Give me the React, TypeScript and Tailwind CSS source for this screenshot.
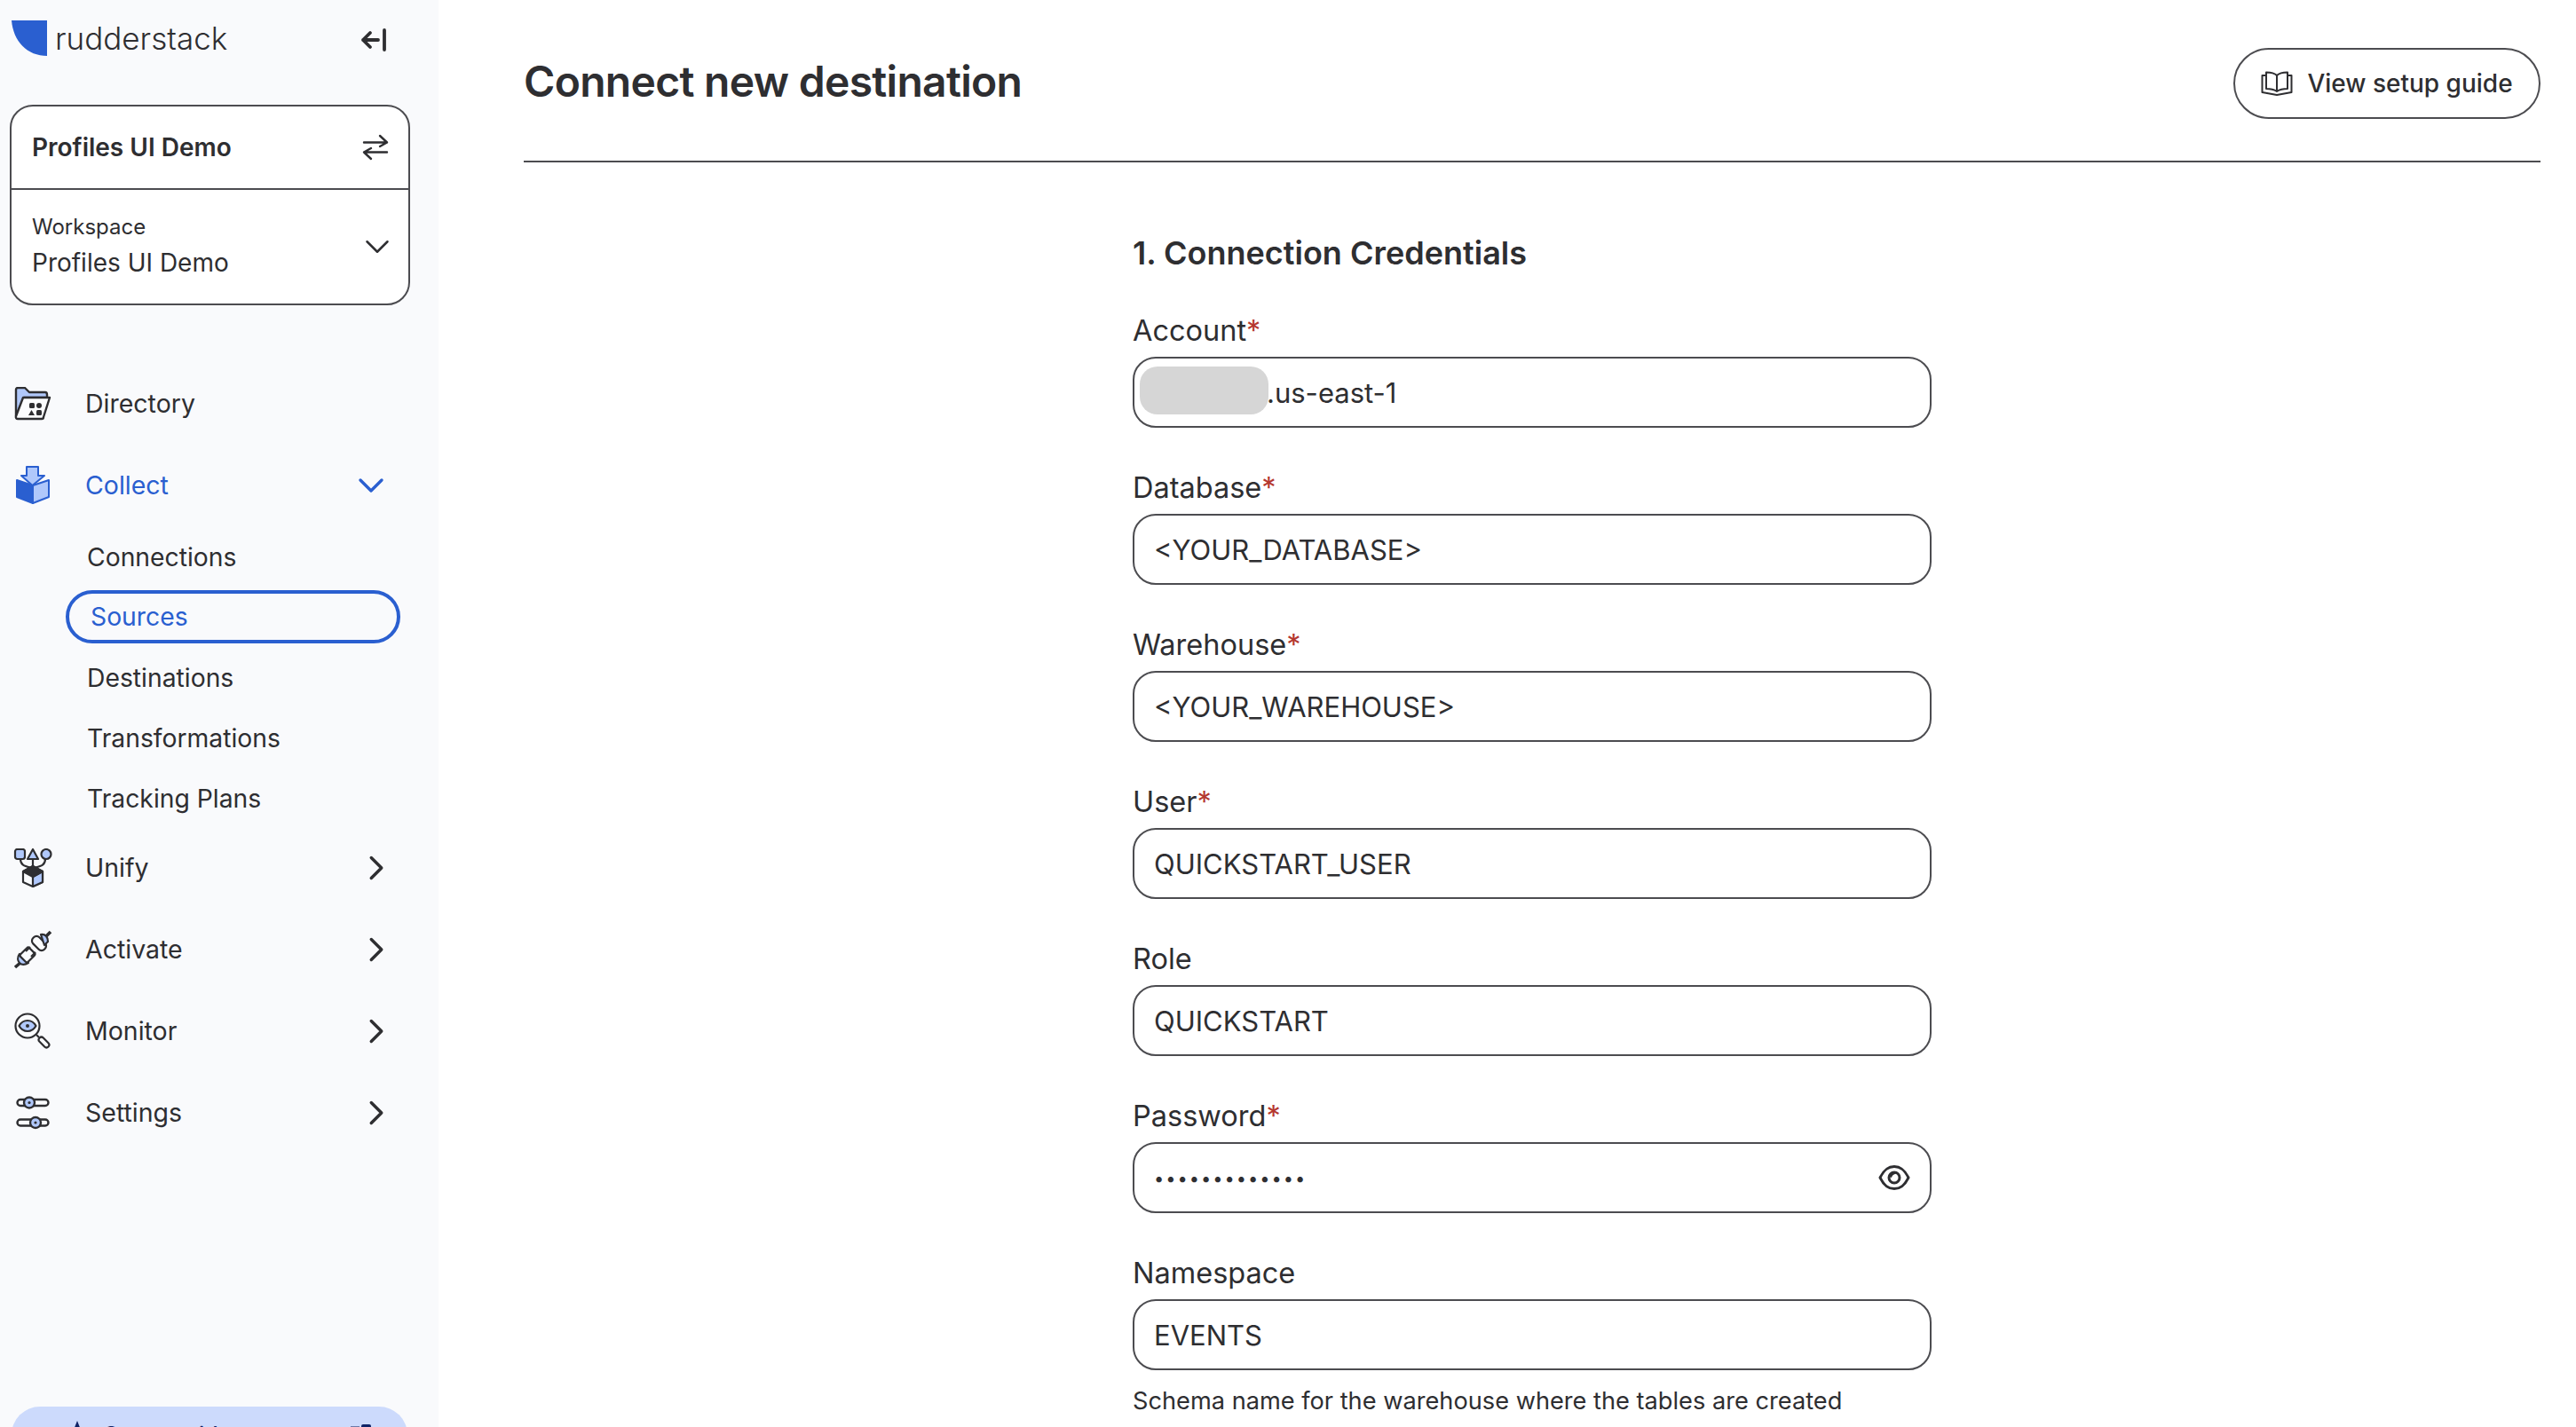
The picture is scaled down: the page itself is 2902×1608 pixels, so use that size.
import { ChevronDown, ChevronRight } from "lucide-react";

const blue = "#2a5fd0";
const light = "#b0c8fb";
const ink = "#2e2e31";

function Logo() {
  return (
    <svg width="40" height="40" viewBox="0 0 40 40" className="shrink-0">
      <path d="M0 0H40V40C18 40 2 24 0 0Z" fill={blue} />
    </svg>
  );
}

function CollapseIcon() {
  return (
    <svg width="30" height="26" viewBox="0 0 30 26" fill="none" stroke={ink} strokeWidth="3.8" strokeLinecap="round" strokeLinejoin="round">
      <path d="M11 5L3 13L11 21M3 13H20" />
      <path d="M27 2V24" />
    </svg>
  );
}

function SwapIcon() {
  return (
    <svg width="30" height="30" viewBox="0 0 30 30" fill="none" stroke={ink} strokeWidth="2.4" strokeLinecap="round" strokeLinejoin="round">
      <path d="M2 9.5H28M20 2L28 9.5L20 14" />
      <path d="M28 20.5H2M10 28L2 20.5L10 16" />
    </svg>
  );
}

function DirectoryIcon() {
  return (
    <svg width="42" height="38" viewBox="0 0 42 38" fill="none" stroke={ink} strokeWidth="2.4" strokeLinejoin="round">
      <path d="M2 33V3C2 2 3 1 4 1H12L17 6H35C36 6 37 7 37 9V12H11L2 33Z" fill={light} />
      <path d="M10 12H40L33 34C33 35 32 36 31 36H4C2.5 36 1.5 35 2 33Z" fill="#fbfcfe" />
      <rect x="17" y="18" width="6" height="6" rx="1.5" fill={ink} stroke="none" />
      <circle cx="28" cy="21" r="3" fill={ink} stroke="none" />
      <path d="M16 32L19.5 26L23 32Z" fill={ink} stroke="none" />
      <rect x="25" y="26" width="6" height="6" rx="1.5" fill={ink} stroke="none" />
    </svg>
  );
}

function CollectIcon() {
  return (
    <svg width="38" height="44" viewBox="0 0 38 44" fill="none" stroke={blue} strokeWidth="2" strokeLinejoin="round">
      <path d="M19 22L1 16V35L19 42Z" fill={blue} />
      <path d="M19 22L37 16V35L19 42Z" fill={light} />
      <path d="M12 1H25V11H32L18.5 22L6 11H12Z" fill={light} />
    </svg>
  );
}

function UnifyIcon() {
  return (
    <svg width="44" height="44" viewBox="0 0 44 44" fill="none" stroke={ink} strokeWidth="2.2" strokeLinejoin="round">
      <path d="M8 12C8 19 13 20 20 22M22 12V20M36 12C36 19 31 20 24 22" />
      <rect x="2" y="1" width="11" height="11" rx="2.5" fill={light} />
      <path d="M22 1L28 12H16Z" fill={light} />
      <circle cx="37" cy="6.5" r="5.5" fill={light} />
      <path d="M22 20L33 26V38L22 43L11 38V26Z" fill="#fbfcfe" />
      <path d="M22 32L33 26V38L22 43Z" fill={light} />
      <path d="M22 20L33 26L22 32L11 26Z" fill={ink} />
    </svg>
  );
}

function ActivateIcon() {
  return (
    <svg width="44" height="44" viewBox="0 0 44 44" fill="none" stroke={ink} strokeWidth="2.2" strokeLinejoin="round">
      <path d="M2 42L9 36M35 9L42 2" strokeWidth="3.6" />
      <path d="M7 27L17 37C12 40 9 39 7 37C5 35 4 31 7 27Z" fill={light} />
      <rect x="-6" y="-7" width="12" height="14" rx="2" transform="translate(16 28) rotate(45)" fill="#fbfcfe" />
      <path d="M19 19L14 24M25 25L20 30" />
      <rect x="-9" y="-5" width="18" height="10" rx="4.5" transform="translate(29 15) rotate(45)" fill="#fbfcfe" />
      <path d="M31 5C36 4 39 8 39 13L35 17Z" fill={light} />
    </svg>
  );
}

function MonitorIcon() {
  return (
    <svg width="42" height="42" viewBox="0 0 42 42" fill="none" stroke={ink} strokeWidth="2.2" strokeLinejoin="round">
      <circle cx="15" cy="15" r="13.5" fill="#fbfcfe" />
      <path d="M5.5 15C8 10.5 11 9 15 9C19 9 22 10.5 24.5 15C22 19.5 19 21 15 21C11 21 8 19.5 5.5 15Z" fill={light} />
      <circle cx="15" cy="15" r="2" fill={ink} stroke="none" />
      <path d="M25 25L28 28" />
      <rect x="-7" y="-3" width="14" height="6" rx="3" transform="translate(33.5 33.5) rotate(45)" fill="#fbfcfe" />
    </svg>
  );
}

function SettingsIcon() {
  return (
    <svg width="38" height="38" viewBox="0 0 38 38" fill="none" stroke={ink} strokeWidth="2.4">
      <rect x="1.5" y="4" width="35" height="7" rx="3.5" fill="#fbfcfe" />
      <circle cx="15" cy="7.5" r="6" fill={light} />
      <circle cx="15" cy="7.5" r="1.6" fill={ink} stroke="none" />
      <rect x="1.5" y="26.5" width="35" height="7" rx="3.5" fill="#fbfcfe" />
      <circle cx="22" cy="30" r="6" fill={light} />
      <circle cx="22" cy="30" r="1.6" fill={ink} stroke="none" />
    </svg>
  );
}

function BookIcon() {
  return (
    <svg width="36" height="28" viewBox="0 0 36 28" fill="none" stroke={ink} strokeWidth="2" strokeLinejoin="round">
      <path d="M6 1.5C10 1.5 15 2 18 5C21 2 26 1.5 30 1.5V20C26 20 21 21 18 23C15 21 10 20 6 20Z" />
      <path d="M18 5V23" />
      <path d="M6 5H1.5V24L18 27L34.5 24V5H30" />
    </svg>
  );
}

function EyeIcon() {
  return (
    <svg width="36" height="28" viewBox="0 0 36 28" fill="none" stroke={ink} strokeWidth="3" strokeLinejoin="round" className="mb-[2px]">
      <path d="M2 14C6.5 5 11 1.5 18 1.5C25 1.5 29.5 5 34 14C29.5 23 25 26.5 18 26.5C11 26.5 6.5 23 2 14Z" />
      <circle cx="18" cy="14" r="6" />
      <path d="M12 13C12 9 15 7.5 18 7.5C19.5 7.5 21 8 22 9C19 9.5 16 10.5 15 14Z" fill={ink} stroke="none" />
    </svg>
  );
}

function NavRow({ icon, label, open = false, chevron = true }: { icon: React.ReactNode; label: string; open?: boolean; chevron?: boolean }) {
  return (
    <div className="flex h-[92px] items-center">
      <div className="flex w-[96px] shrink-0 justify-center pr-[22px]">{icon}</div>
      <span className={`flex-1 text-[28.5px] ${open ? "text-[#2a5fd0]" : "text-[#2e2e31]"}`}>{label}</span>
      {chevron &&
        (open ? (
          <ChevronDown size={48} strokeWidth={1.7} color={blue} className="mr-[52px]" />
        ) : (
          <ChevronRight size={46} strokeWidth={1.8} color={ink} className="mr-[47px]" />
        ))}
    </div>
  );
}

function SubRow({ label, active = false }: { label: string; active?: boolean }) {
  return active ? (
    <div className="flex h-[68px] items-center">
      <div className="mb-[2px] ml-[74px] mr-[43px] flex h-[60px] flex-1 items-center rounded-full border-[4px] border-[#2a5fd0] pl-[24px] text-[28.3px] text-[#2a5fd0]">
        {label}
      </div>
    </div>
  ) : (
    <div className="ml-[98px] flex h-[68px] items-center text-[28.3px] text-[#2e2e31]">{label}</div>
  );
}

function Field({ label, required = false, value, hint, children }: { label: string; required?: boolean; value?: string; hint?: string; children?: React.ReactNode }) {
  return (
    <div className="h-[177px]">
      <div className="flex h-[48px] items-start text-[32.5px] leading-[38px] text-[#2e2e31]">
        {label}
        {required && <span className="text-[#b5372f]">*</span>}
      </div>
      <div className="flex h-[80px] items-center rounded-[26px] border-2 border-[#4c4c50] bg-white px-[22px] pt-[2px] text-[31px] text-[#2e2e31]">
        {value}
        {children}
      </div>
      {hint && <p className="mt-[17px] text-[27.2px] leading-[36px] text-[#2e2e31]">{hint}</p>}
    </div>
  );
}

export default function App() {
  return (
    <div className="flex h-[1608px] w-[2902px] overflow-hidden bg-white font-['Inter',sans-serif] text-[#2e2e31]">
      <aside className="flex w-[494px] shrink-0 flex-col overflow-hidden bg-[#f9fafc]">
        <div className="flex h-[118px] shrink-0 items-start pl-[13px] pr-[58px] pt-[23px]">
          <Logo />
          <span className="ml-[9px] flex-1 text-[35px] font-light leading-[40px]">rudderstack</span>
          <div className="pt-[9px]">
            <CollapseIcon />
          </div>
        </div>

        <div className="ml-[11px] h-[226px] w-[451px] shrink-0 rounded-[26px] border-2 border-[#4c4c50] bg-white">
          <div className="flex h-[94px] items-center justify-between border-b-2 border-[#4c4c50] pl-[23px] pr-[22px]">
            <span className="text-[28px] font-semibold">Profiles UI Demo</span>
            <SwapIcon />
          </div>
          <div className="flex h-[128px] items-center justify-between pl-[23px] pr-[12px]">
            <div>
              <div className="text-[24px] leading-[36px]">Workspace</div>
              <div className="text-[28px] leading-[44px]">Profiles UI Demo</div>
            </div>
            <ChevronDown size={46} strokeWidth={1.3} color={ink} />
          </div>
        </div>

        <nav className="mt-[65px] shrink-0">
          <NavRow icon={<DirectoryIcon />} label="Directory" chevron={false} />
          <NavRow icon={<CollectIcon />} label="Collect" open />
          <div className="mb-[-2px] mt-[1px]">
            <SubRow label="Connections" />
            <SubRow label="Sources" active />
            <SubRow label="Destinations" />
            <SubRow label="Transformations" />
            <SubRow label="Tracking Plans" />
          </div>
          <NavRow icon={<UnifyIcon />} label="Unify" />
          <NavRow icon={<ActivateIcon />} label="Activate" />
          <NavRow icon={<MonitorIcon />} label="Monitor" />
          <NavRow icon={<SettingsIcon />} label="Settings" />
        </nav>

        <div className="ml-[13px] mt-[285px] flex h-[90px] w-[446px] shrink-0 items-start rounded-[32px] bg-[#ccdafc] pl-[58px] pr-[40px] pt-[14px] text-[25px] font-medium text-[#0f2467]">
          <svg width="36" height="36" viewBox="0 0 36 36" fill="#0f2467" className="shrink-0">
            <path d="M16 2L20 12L30 16L20 20L16 30L12 20L2 16L12 12Z" />
          </svg>
          <span className="ml-[10px] flex-1">Setup guide</span>
          <svg width="24" height="24" viewBox="0 0 24 24" fill="#0f2467" className="mt-[6px] shrink-0">
            <rect x="0" y="2" width="10" height="20" fill="#6d7aa8" />
            <rect x="12" y="0" width="11" height="22" rx="2" />
          </svg>
        </div>
      </aside>

      <main className="min-w-0 flex-1 pl-[96px] pr-[40px]">
        <header className="flex h-[183px] items-start justify-between border-b-2 border-[#4c4c50] pt-[54px]">
          <h1 className="pt-[8px] text-[48px] font-semibold leading-[60px] tracking-[-0.7px]">Connect new destination</h1>
          <div className="flex h-[80px] w-[346px] items-center justify-center gap-[16px] rounded-full border-2 border-[#4c4c50] text-[28px] font-medium">
            <BookIcon />
            View setup guide
          </div>
        </header>

        <div className="mx-auto w-[900px] pt-[80px]">
          <h2 className="h-[91px] text-[36px] font-semibold leading-[44px]">1. Connection Credentials</h2>
          <Field label="Account" required>
            <div className="mb-[6px] ml-[-16px] h-[54px] w-[145px] shrink-0 rounded-[20px] bg-[#d6d6d6]" />
            <span className="ml-[-2px]">.us-east-1</span>
          </Field>
          <Field label="Database" required value="<YOUR_DATABASE>" />
          <Field label="Warehouse" required value="<YOUR_WAREHOUSE>" />
          <Field label="User" required value="QUICKSTART_USER" />
          <Field label="Role" value="QUICKSTART" />
          <Field label="Password" required>
            <span className="flex-1 text-[20px] tracking-[2px]">•••••••••••••</span>
            <EyeIcon />
          </Field>
          <Field label="Namespace" value="EVENTS" hint="Schema name for the warehouse where the tables are created" />
        </div>
      </main>
    </div>
  );
}
